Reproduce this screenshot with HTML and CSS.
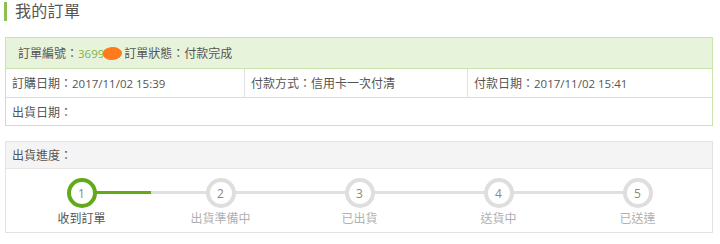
FILE: index.html
```html
<!DOCTYPE html>
<html lang="zh-Hant">
<head>
<meta charset="utf-8">
<title>我的訂單</title>
<link rel="stylesheet" href="styles.css">
</head>
<body>
<h1 class="page-title">我的訂單</h1>

<section class="order-box">
  <div class="order-head">
    <span>訂單編號：</span><span class="order-no num">3699</span><span class="redact"></span><span class="status">訂單狀態：</span><span class="status-val">付款完成</span>
  </div>
  <div class="order-row three">
    <div class="cell">訂購日期：<span class="num">2017/11/02 15:39</span></div>
    <div class="cell">付款方式：信用卡一次付清</div>
    <div class="cell">付款日期：<span class="num">2017/11/02 15:41</span></div>
  </div>
  <div class="order-row">
    <div class="cell">出貨日期：</div>
  </div>
</section>

<section class="ship-box">
  <div class="ship-head">出貨進度：</div>
  <ol class="steps">
    <li class="step active"><span class="dot">1</span><span class="label">收到訂單</span></li>
    <li class="step"><span class="dot">2</span><span class="label">出貨準備中</span></li>
    <li class="step"><span class="dot">3</span><span class="label">已出貨</span></li>
    <li class="step"><span class="dot">4</span><span class="label">送貨中</span></li>
    <li class="step"><span class="dot">5</span><span class="label">已送達</span></li>
  </ol>
</section>
</body>
</html>
```

FILE: styles.css
```css
* { box-sizing: border-box; }
body {
  margin: 0;
  background: #fff;
  font-family: "Open Sans", "Noto Sans CJK TC", sans-serif;
  color: #555;
  font-size: 12px;
}
.num { font-size: 11.5px; }
.page-title {
  margin: 2px 0 0 4px;
  padding-left: 8px;
  border-left: 3px solid #8cc152;
  font-size: 16px;
  font-weight: normal;
  line-height: 19px;
  color: #555;
  letter-spacing: 0.3px;
}
.order-box {
  margin: 16px 7px 0 5px;
  border: 1px solid #c9e4ad;
}
.order-head {
  height: 31px;
  background: #e8f3dc;
  border-bottom: 1px solid #c9e4ad;
  padding-left: 12px;
  display: flex;
  align-items: center;
  color: #555;
}
.order-no { color: #7cb342; }
.redact {
  display: inline-block;
  width: 19px;
  height: 13px;
  margin-left: -1px;
  margin-right: 2px;
  background: #ff7b1c;
  border-radius: 45% 55% 50% 50%;
  transform: rotate(-5deg);
}
.order-row {
  height: 28px;
  display: flex;
  align-items: stretch;
}
.order-row + .order-row { border-top: 1px solid #ddd; }
.order-row.three {
  display: grid;
  grid-template-columns: 239px 223px 1fr;
}
.cell {
  display: flex;
  align-items: center;
  padding-left: 6px;
  white-space: pre;
}
.order-row.three .cell:not(:last-child) { border-right: 1px solid #e2e2e2; }
.ship-box {
  margin: 15px 7px 0 5px;
  border: 1px solid #e2e2e2;
}
.ship-head {
  height: 27px;
  background: #f4f4f4;
  border-bottom: 1px solid #e5e5e5;
  padding-left: 6px;
  display: flex;
  align-items: center;
}
.steps {
  list-style: none;
  margin: 0;
  padding: 9px 5px 0 6px;
  height: 63px;
  display: grid;
  grid-template-columns: repeat(5, 1fr);
}
.step {
  position: relative;
  display: flex;
  flex-direction: column;
  align-items: center;
}
.step:not(:last-child)::after {
  content: "";
  position: absolute;
  left: 50%;
  width: 100%;
  top: 13px;
  height: 3px;
  background: #e0e0e0;
}
.step.active::after {
  background: linear-gradient(to right, #64a91a 50%, #e0e0e0 50%);
}
.dot {
  position: relative;
  z-index: 1;
  width: 30px;
  height: 30px;
  border: 4px solid #dedede;
  border-radius: 50%;
  background: #fff;
  display: flex;
  align-items: center;
  justify-content: center;
  color: #888;
  font-size: 12px;
}
.step.active .dot { border-color: #64a91a; }
.label {
  margin-top: 3px;
  line-height: 16px;
  color: #b0b0b0;
}
.step.active .label { color: #555; }
```
